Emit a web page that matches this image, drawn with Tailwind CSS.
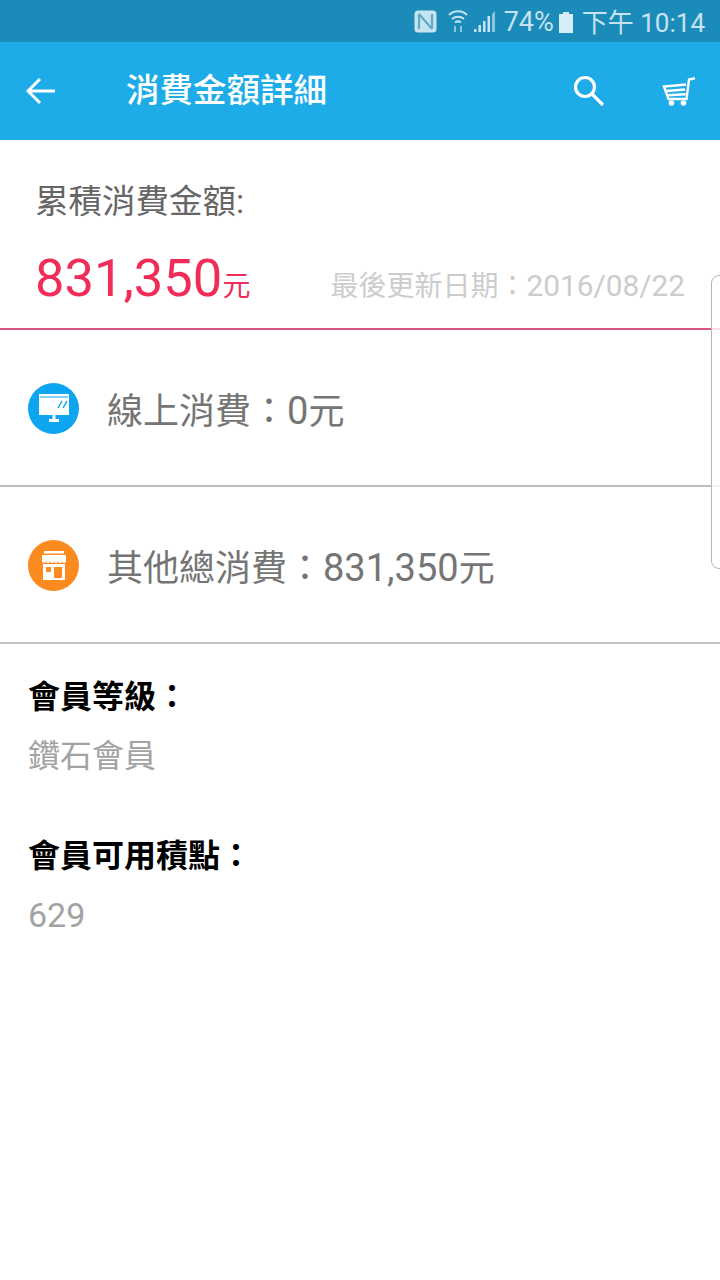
<!DOCTYPE html>
<html lang="zh-Hant">
<head>
<meta charset="UTF-8">
<meta name="viewport" content="width=device-width, initial-scale=1.0">
<title>消費金額詳細</title>
<script src="https://cdn.jsdelivr.net/npm/@tailwindcss/browser@4"></script>
</head>
<body class="bg-white">
<div class="relative w-[720px] h-[1280px] overflow-hidden bg-white font-['Roboto','Noto_Sans_CJK_TC',sans-serif]">

  <!-- status bar -->
  <div class="h-[42px] bg-[#1b8bba] flex items-center justify-end pr-[15px] text-[#c6e3ef] text-[27px] leading-none">
    <svg class="w-[23px] h-[23px] mr-[11px] mt-[1px]" viewBox="0 0 23 23"><rect x="0.5" y="0.5" width="22" height="22" rx="3.500" fill="#c6e3ef"/><path d="M5 4v15M18 4v15M5 4l13 15" fill="none" stroke="#5fa9c9" stroke-width="2.200"/></svg>
    <svg class="w-[20px] h-[24px] mr-[6px]" viewBox="0 0 20 24" fill="none" stroke="#c6e3ef" stroke-width="2"><path d="M1 6c5-5 13-5 18 0M4 10c3.500-3 8.500-3 12 0M7 13.500c2-1.500 4-1.500 6 0"/><path d="M7 23v-6M13 17v6" stroke="#8fc5dc"/></svg>
    <svg class="w-[21px] h-[21px] mr-[9px] mt-[1px]" viewBox="0 0 21 21"><path d="M0 21h2.500v-3H0zM4.500 21h2.500v-7H4.500zM9 21h2.500V10H9zM13.500 21H16V5h-2.500z" fill="#c6e3ef"/><path d="M18 21h3V0l-3 3z" fill="#8fc5dc"/></svg>
    <span class="pt-[3px]">74%</span>
    <svg class="w-[14px] h-[21px] ml-[5px] mr-[9px] mt-[2px]" viewBox="0 0 14 21"><path d="M4 0h6v2h4v19H0V2h4z" fill="#d8edf5"/></svg>
    <span class="text-[26px] pt-[3px]">下午 10:14</span>
  </div>

  <!-- app bar -->
  <div class="h-[98px] bg-[#1eace8] flex items-center text-white">
    <svg class="w-[30px] h-[28px] ml-[26px]" viewBox="0 0 30 28" fill="none" stroke="white" stroke-width="3"><path d="M29 14H3M14 2 2 14l12 12"/></svg>
    <h1 class="ml-[70px] text-[33.500px] font-medium leading-none">消費金額詳細</h1>
    <svg class="w-[32px] h-[32px] ml-auto" viewBox="0 0 32 32" fill="none" stroke="white" stroke-width="3.200"><circle cx="12" cy="12" r="9.500"/><path d="m19 19 11 11"/></svg>
    <svg class="w-[33px] h-[29px] ml-[57px] mr-[25px]" viewBox="0 0 33 29" fill="none" stroke="white" stroke-width="2.400"><path d="M33 1.300 27 2.500 24.500 22H6.500L2 9.500l22-2M4 14l19-1.500M5.500 18.200l18-1"/><circle cx="9.500" cy="26" r="2.800" fill="white" stroke="none"/><circle cx="21.500" cy="26" r="2.800" fill="white" stroke="none"/></svg>
  </div>

  <!-- total -->
  <div class="h-[190px] border-b-2 border-[#d9567c] pl-[35px] pr-[35px]">
    <p class="pt-[42px] text-[33.500px] leading-[40px] text-[#666666]">累積消費金額:</p>
    <div class="mt-[26px] flex items-baseline justify-between">
      <p class="text-[#f02d58] text-[52.500px] leading-[60px]">831,350<span class="text-[28px]">元</span></p>
      <p class="text-[28px] text-[#cccccc] leading-[40px]">最後更新日期：<span class="text-[29.800px]">2016/08/22</span></p>
    </div>
  </div>

  <!-- online -->
  <div class="h-[157px] border-b-2 border-[#bdbdbd] flex items-center pl-[28px]">
    <div class="w-[51px] h-[51px] rounded-full bg-[#0ea5f0] flex items-center justify-center mt-[1px]">
      <svg class="w-[30px] h-[28px]" viewBox="0 0 30 28"><path d="M0 0h30v21H0z" fill="white"/><path d="M1 3h28" stroke="#0ea5f0" stroke-width="1"/><path d="m19 14 4-7M24 14l4-7" stroke="#0ea5f0" stroke-width="1.500"/><path d="M13.500 21h3v4h-3zM10 25h10v3H10z" fill="white"/></svg>
    </div>
    <p class="ml-[28px] pt-[7px] text-[36px] text-[#757575] leading-none">線上消費：<span class="text-[38px]">0</span>元</p>
  </div>

  <!-- other -->
  <div class="h-[157px] border-b-2 border-[#c4c4c4] flex items-center pl-[28px]">
    <div class="w-[51px] h-[51px] rounded-full bg-[#fb8a1f] flex items-center justify-center mt-[1px]">
      <svg class="w-[24px] h-[29px]" viewBox="0 0 24 29"><path d="M2 0h20v2.500H2z" fill="white"/><path d="M0 4h24v6a2 2 0 0 1-4 0 2 2 0 0 1-4 0 2 2 0 0 1-4 0 2 2 0 0 1-4 0 2 2 0 0 1-4 0 2 2 0 0 1-4 0z" fill="white"/><path d="M1 13h22v16H1z" fill="white"/><path d="M4 16h5v5H4zM12 16h8v11h-8z" fill="#fb8a1f"/></svg>
    </div>
    <p class="ml-[28px] pt-[7px] text-[36px] text-[#757575] leading-none">其他總消費：<span class="text-[38px]">831,350</span>元</p>
  </div>

  <!-- member -->
  <div class="pl-[28px] pt-[33px] text-[32px] leading-[40px]">
    <p class="font-bold text-black">會員等級：</p>
    <p class="mt-[19px] text-[#a3a3a3]">鑽石會員</p>
    <p class="mt-[60px] font-bold text-black">會員可用積點：</p>
    <p class="mt-[19px] text-[#a3a3a3] text-[34px]">629</p>
  </div>

  <!-- edge panel handle -->
  <div class="absolute left-[711px] top-[275px] w-[20px] h-[294px] rounded-l-[8px] border border-[#b5b5b5] bg-white/80"></div>
</div>
</body>
</html>
